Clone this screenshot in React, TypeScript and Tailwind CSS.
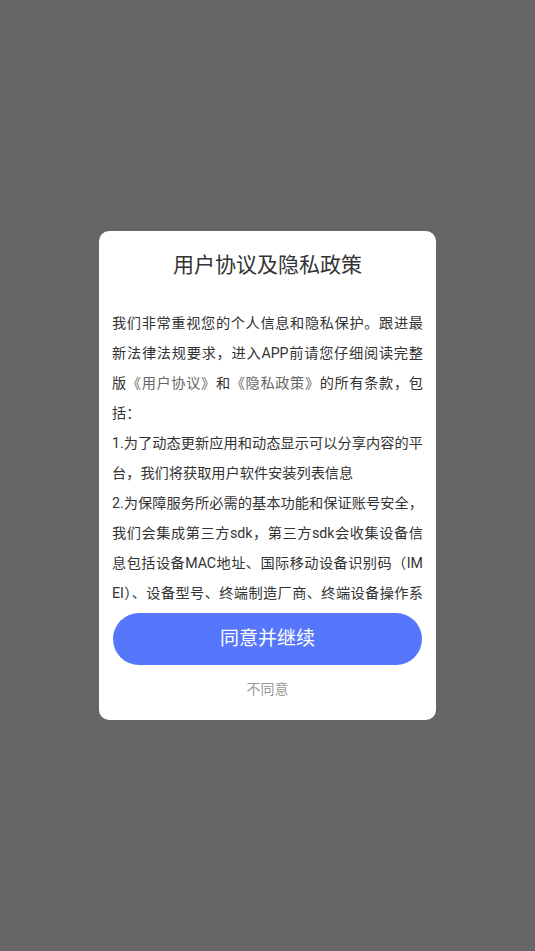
import React from 'react';

const font = { fontFamily: 'Roboto, "Noto Sans CJK SC", sans-serif' };

// each row of the agreement text, as it wraps in the dialog; `j` = justified row
const rows: { text: React.ReactNode; j: boolean }[] = [
  { text: '我们非常重视您的个人信息和隐私保护。跟进最', j: true },
  { text: '新法律法规要求，进入APP前请您仔细阅读完整', j: true },
  {
    text: (
      <>
        版<span className="text-[#666666]">《用户协议》</span>和<span className="text-[#666666]">《隐私政策》</span>的所有条款，包
      </>
    ),
    j: true,
  },
  { text: '括：', j: false },
  { text: '1.为了动态更新应用和动态显示可以分享内容的平', j: true },
  { text: '台，我们将获取用户软件安装列表信息', j: false },
  { text: '2.为保障服务所必需的基本功能和保证账号安全，', j: true },
  { text: '我们会集成第三方sdk，第三方sdk会收集设备信', j: true },
  { text: '息包括设备MAC地址、国际移动设备识别码（IM', j: true },
  { text: 'EI）、设备型号、终端制造厂商、终端设备操作系', j: true },
];

export default function App() {
  return (
    <div className="w-full h-[951px] bg-[#666666] flex items-center justify-center" style={font}>
      <div className="w-[337px] bg-white rounded-[10px] flex flex-col items-center pt-[20px] pb-[21px]">
        <h1 className="text-[21px] leading-[28px] text-[#333333]">用户协议及隐私政策</h1>

        <div className="mt-[29px] w-full px-[13px] h-[300px] overflow-hidden">
          <div className="text-[14.2px] leading-[30px] text-[#333333]">
            {rows.map((r, i) => (
              <div
                key={i}
                className={r.j ? 'whitespace-nowrap text-justify [text-align-last:justify]' : 'whitespace-nowrap'}
              >
                {r.text}
              </div>
            ))}
          </div>
        </div>

        <button className="mt-[5px] w-[309px] h-[52px] rounded-full bg-[#5677fc] text-white text-[19px]">
          同意并继续
        </button>
        <button className="mt-[14px] text-[14px] leading-[20px] text-[#999999]">不同意</button>
      </div>
    </div>
  );
}
